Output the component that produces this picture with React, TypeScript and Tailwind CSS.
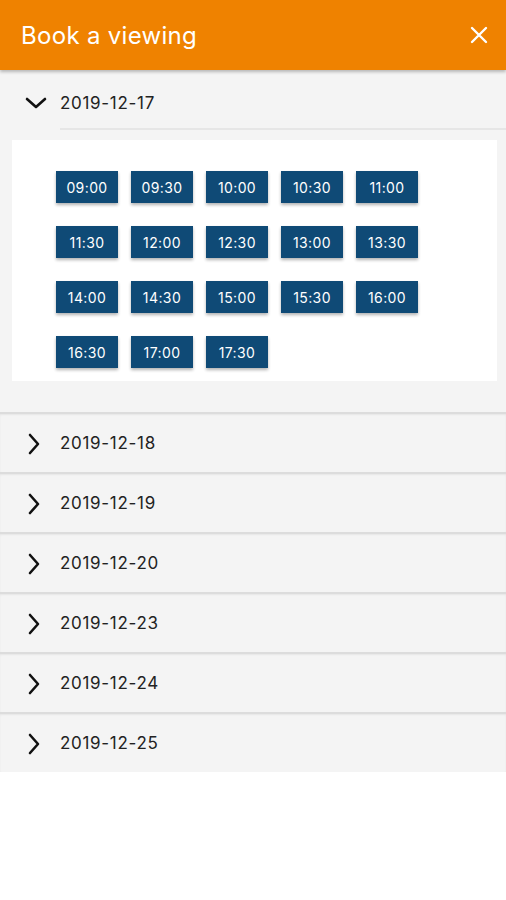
import React from "react";

const times = [
  "09:00","09:30","10:00","10:30","11:00",
  "11:30","12:00","12:30","13:00","13:30",
  "14:00","14:30","15:00","15:30","16:00",
  "16:30","17:00","17:30",
];

const dates = ["2019-12-18","2019-12-19","2019-12-20","2019-12-23","2019-12-24","2019-12-25"];

function ChevronDown() {
  return (
    <svg width="22" height="14" viewBox="0 0 22 14" fill="none">
      <path d="M2 3 L11 11 L20 3" stroke="#111" strokeWidth="2.6" strokeLinecap="round" strokeLinejoin="round" />
    </svg>
  );
}

function ChevronRight() {
  return (
    <svg width="14" height="22" viewBox="0 0 14 22" fill="none">
      <path d="M3 2 L11 11 L3 20" stroke="#111" strokeWidth="2.6" strokeLinecap="round" strokeLinejoin="round" />
    </svg>
  );
}

export default function App() {
  return (
    <div className="w-[506px] h-[900px] bg-white overflow-hidden" style={{ fontFamily: "Inter, 'Open Sans', sans-serif" }}>
      <header className="relative z-10 h-[70px] bg-[#ef8200] flex items-center justify-between pl-[21px] pr-[18px] shadow-[0_2px_3px_rgba(0,0,0,0.25)]">
        <span className="text-white text-[24px] tracking-[0.3px] leading-none mt-[2px]">Book a viewing</span>
        <svg width="18" height="18" viewBox="0 0 18 18" fill="none">
          <path d="M2 2 L16 16 M16 2 L2 16" stroke="#fff" strokeWidth="2.4" strokeLinecap="round" />
        </svg>
      </header>

      <div className="bg-[#f4f4f4]">
        <div className="h-[58px] flex items-center">
          <div className="w-[60px] flex justify-center pl-[12px] pt-[8px]">
            <ChevronDown />
          </div>
          <span className="text-[17px] text-[#222] tracking-[0.7px] mt-[10px]">2019-12-17</span>
        </div>
        <div className="ml-[60px] h-[2px] bg-[#e6e6e6]" />
        <div className="pt-[10px] pb-[31px] pl-[12px] pr-[9px]">
          <div className="bg-white pt-[31px] pb-[13px] pl-[44px]">
            <div className="grid grid-cols-[repeat(5,62px)] gap-x-[13px] gap-y-[23px]">
              {times.map((t) => (
                <div
                  key={t}
                  className="h-[32px] bg-[#0f4a76] text-white text-[14px] tracking-[0.4px] flex items-center justify-center shadow-[0_2px_3px_rgba(0,0,0,0.3)]"
                >
                  {t}
                </div>
              ))}
            </div>
          </div>
        </div>
        {dates.map((d) => (
          <div key={d} className="h-[60px] flex items-center pt-[2px] border-t-2 border-[#dcdcdc] shadow-[inset_0_1px_2px_rgba(0,0,0,0.06)]">
            <div className="w-[60px] flex justify-center pl-[10px] pr-[2px]">
              <ChevronRight />
            </div>
            <span className="text-[17px] text-[#222] tracking-[0.7px]">{d}</span>
          </div>
        ))}
      </div>
    </div>
  );
}
